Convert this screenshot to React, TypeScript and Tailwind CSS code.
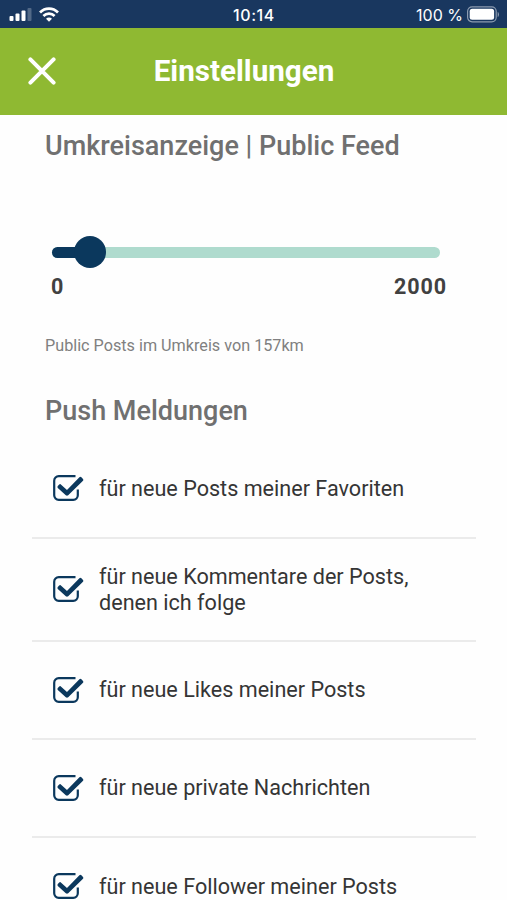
import { useState } from "react";

const pushOptions = [
  { id: "favorites", lines: ["für neue Posts meiner Favoriten"], height: "h-[99px]" },
  { id: "comments", lines: ["für neue Kommentare der Posts,", "denen ich folge"], height: "h-[103px]" },
  { id: "likes", lines: ["für neue Likes meiner Posts"], height: "h-[98px]" },
  { id: "messages", lines: ["für neue private Nachrichten"], height: "h-[98px]" },
  { id: "followers", lines: ["für neue Follower meiner Posts"], height: "h-[99px]" },
];

const MAX_RADIUS = 2000;

const StatusBar = () => (
  <div className="grid h-7 grid-cols-3 items-center bg-[#19375f] pr-[7px] pl-[9px] text-white">
    <div className="flex items-center gap-[7px]">
      <svg width="23" height="13" viewBox="0 0 23 13" fill="currentColor">
        <rect x="0.5" y="8" width="4" height="5" rx="1" />
        <rect x="6.5" y="5.5" width="4" height="7.5" rx="1" />
        <rect x="12.5" y="2.5" width="4" height="10.5" rx="1" />
        <rect x="18.5" y="0" width="4" height="13" rx="1" opacity="0.25" />
      </svg>
      <svg width="20" height="15" viewBox="0 0 20 15" fill="none" stroke="currentColor" strokeWidth="2.7">
        <path d="M1 5.5C6 .4 14 .4 19 5.5" />
        <path d="M4.4 9C7.5 5.9 12.5 5.9 15.6 9" />
        <path d="M10 14.8 7 11.8C8.7 10.2 11.3 10.2 13 11.8Z" fill="currentColor" stroke="none" />
      </svg>
    </div>
    <span className="-ml-[1px] pt-[2px] text-center font-['Inter',sans-serif] text-[16px] leading-5 font-medium tracking-[0.6px]">
      10:14
    </span>
    <div className="flex items-center justify-end gap-1">
      <span className="pt-[2px] font-['Inter',sans-serif] text-[16px] leading-5 whitespace-nowrap">100 %</span>
      <svg width="33" height="17" viewBox="0 0 33 17" fill="none">
        <rect x="0.6" y="0.8" width="28.6" height="15" rx="4.5" stroke="#8c9bb0" strokeWidth="1.2" />
        <rect x="2.7" y="2.8" width="24.4" height="11" rx="2.5" fill="white" />
        <path d="M30.7 6v5c1.7-.6 1.7-4.4 0-5Z" fill="#8c9bb0" />
      </svg>
    </div>
  </div>
);

const Header = () => (
  <header className="grid h-[87px] grid-cols-[68px_1fr_88px] items-center bg-[#8fb932] text-white">
    <button aria-label="Schließen" className="-mt-[2px] ml-[28px] w-7">
      <svg
        width="28"
        height="28"
        viewBox="0 0 28 28"
        fill="none"
        stroke="currentColor"
        strokeWidth="4"
        strokeLinecap="round"
      >
        <path d="M2.4 2.4 25.6 25.6M25.6 2.4 2.4 25.6" />
      </svg>
    </button>
    <h1 className="-mt-[2px] ml-[1px] text-center text-[29.6px] leading-9 font-bold">Einstellungen</h1>
  </header>
);

const RadiusSlider = ({ value }: { value: number }) => (
  <div className="mr-[60px] ml-[51px]">
    <div className="mr-[7px] ml-px flex h-8 items-center">
      <div className="relative h-[11px] w-full rounded-full bg-[#afdbce]">
        <div
          className="h-full rounded-full bg-[#0b385d]"
          style={{ width: `calc(${(value / MAX_RADIUS) * 100}% + 8px)` }}
        />
        <div
          className="absolute top-1/2 size-8 -translate-1/2 rounded-full bg-[#0b385d]"
          style={{ left: `calc(${(value / MAX_RADIUS) * 100}% + 8px)` }}
        />
      </div>
    </div>
    <div className="mt-[7px] flex justify-between text-[21.5px] leading-6 font-bold tracking-[0.9px] text-[#414141]">
      <span>0</span>
      <span>{MAX_RADIUS}</span>
    </div>
  </div>
);

const CheckIcon = ({ checked }: { checked: boolean }) => (
  <svg width="32" height="28" viewBox="0 0 32 28" fill="none" stroke="#0b385d" className="-mt-px">
    <path
      d="M23.5 2.2H6.7A4.5 4.5 0 0 0 2.2 6.7V21.3A4.5 4.5 0 0 0 6.7 25.8H21.3A4.5 4.5 0 0 0 25.8 21.3V15.5"
      strokeWidth="2.2"
    />
    {checked && (
      <path
        d="M8.6 10.2 15 15.9 27.4 3.3Q28.4 2.4 29.4 3.3L31 4.9Q31.8 5.8 31 6.8L16.2 21.3Q15 22.2 13.8 21.3L5.8 13.9Q5 13 5.8 12.1L7.2 10.6Q7.9 9.8 8.6 10.2Z"
        fill="#0b385d"
        stroke="none"
      />
    )}
  </svg>
);

const PushSettings = () => {
  const [enabled, setEnabled] = useState(pushOptions.map((option) => option.id));

  const toggle = (id: string) =>
    setEnabled((prev) => (prev.includes(id) ? prev.filter((item) => item !== id) : [...prev, id]));

  return (
    <ul className="mr-[31px] ml-8">
      {pushOptions.map(({ id, lines, height }) => (
        <li key={id} className={`${height} border-b-2 border-[#ebebeb]`}>
          <button
            role="checkbox"
            aria-checked={enabled.includes(id)}
            onClick={() => toggle(id)}
            className="flex h-full w-full items-center gap-[15px] pl-5 text-left"
          >
            <CheckIcon checked={enabled.includes(id)} />
            <span className="text-[21.6px] leading-[26px] text-[#353535]">
              {lines.map((line) => (
                <span key={line} className="block whitespace-nowrap">
                  {line}
                </span>
              ))}
            </span>
          </button>
        </li>
      ))}
    </ul>
  );
};

const App = () => {
  return (
    <div className="h-[900px] w-[507px] overflow-hidden bg-[#fefefe] font-['Roboto',sans-serif]">
      <StatusBar />
      <Header />
      <h2 className="mt-[15px] ml-[45px] text-[27px] leading-8 font-medium text-[#707070]">
        Umkreisanzeige | Public Feed
      </h2>
      <div className="mt-[74px]">
        <RadiusSlider value={157} />
      </div>
      <p className="mt-[35px] ml-[45px] text-[16.2px] leading-6 text-[#808080]">Public Posts im Umkreis von 157km</p>
      <h2 className="mt-[37px] ml-[45px] text-[27px] leading-8 font-medium text-[#707070]">Push Meldungen</h2>
      <div className="mt-[13px]">
        <PushSettings />
      </div>
    </div>
  );
};

export default App;
